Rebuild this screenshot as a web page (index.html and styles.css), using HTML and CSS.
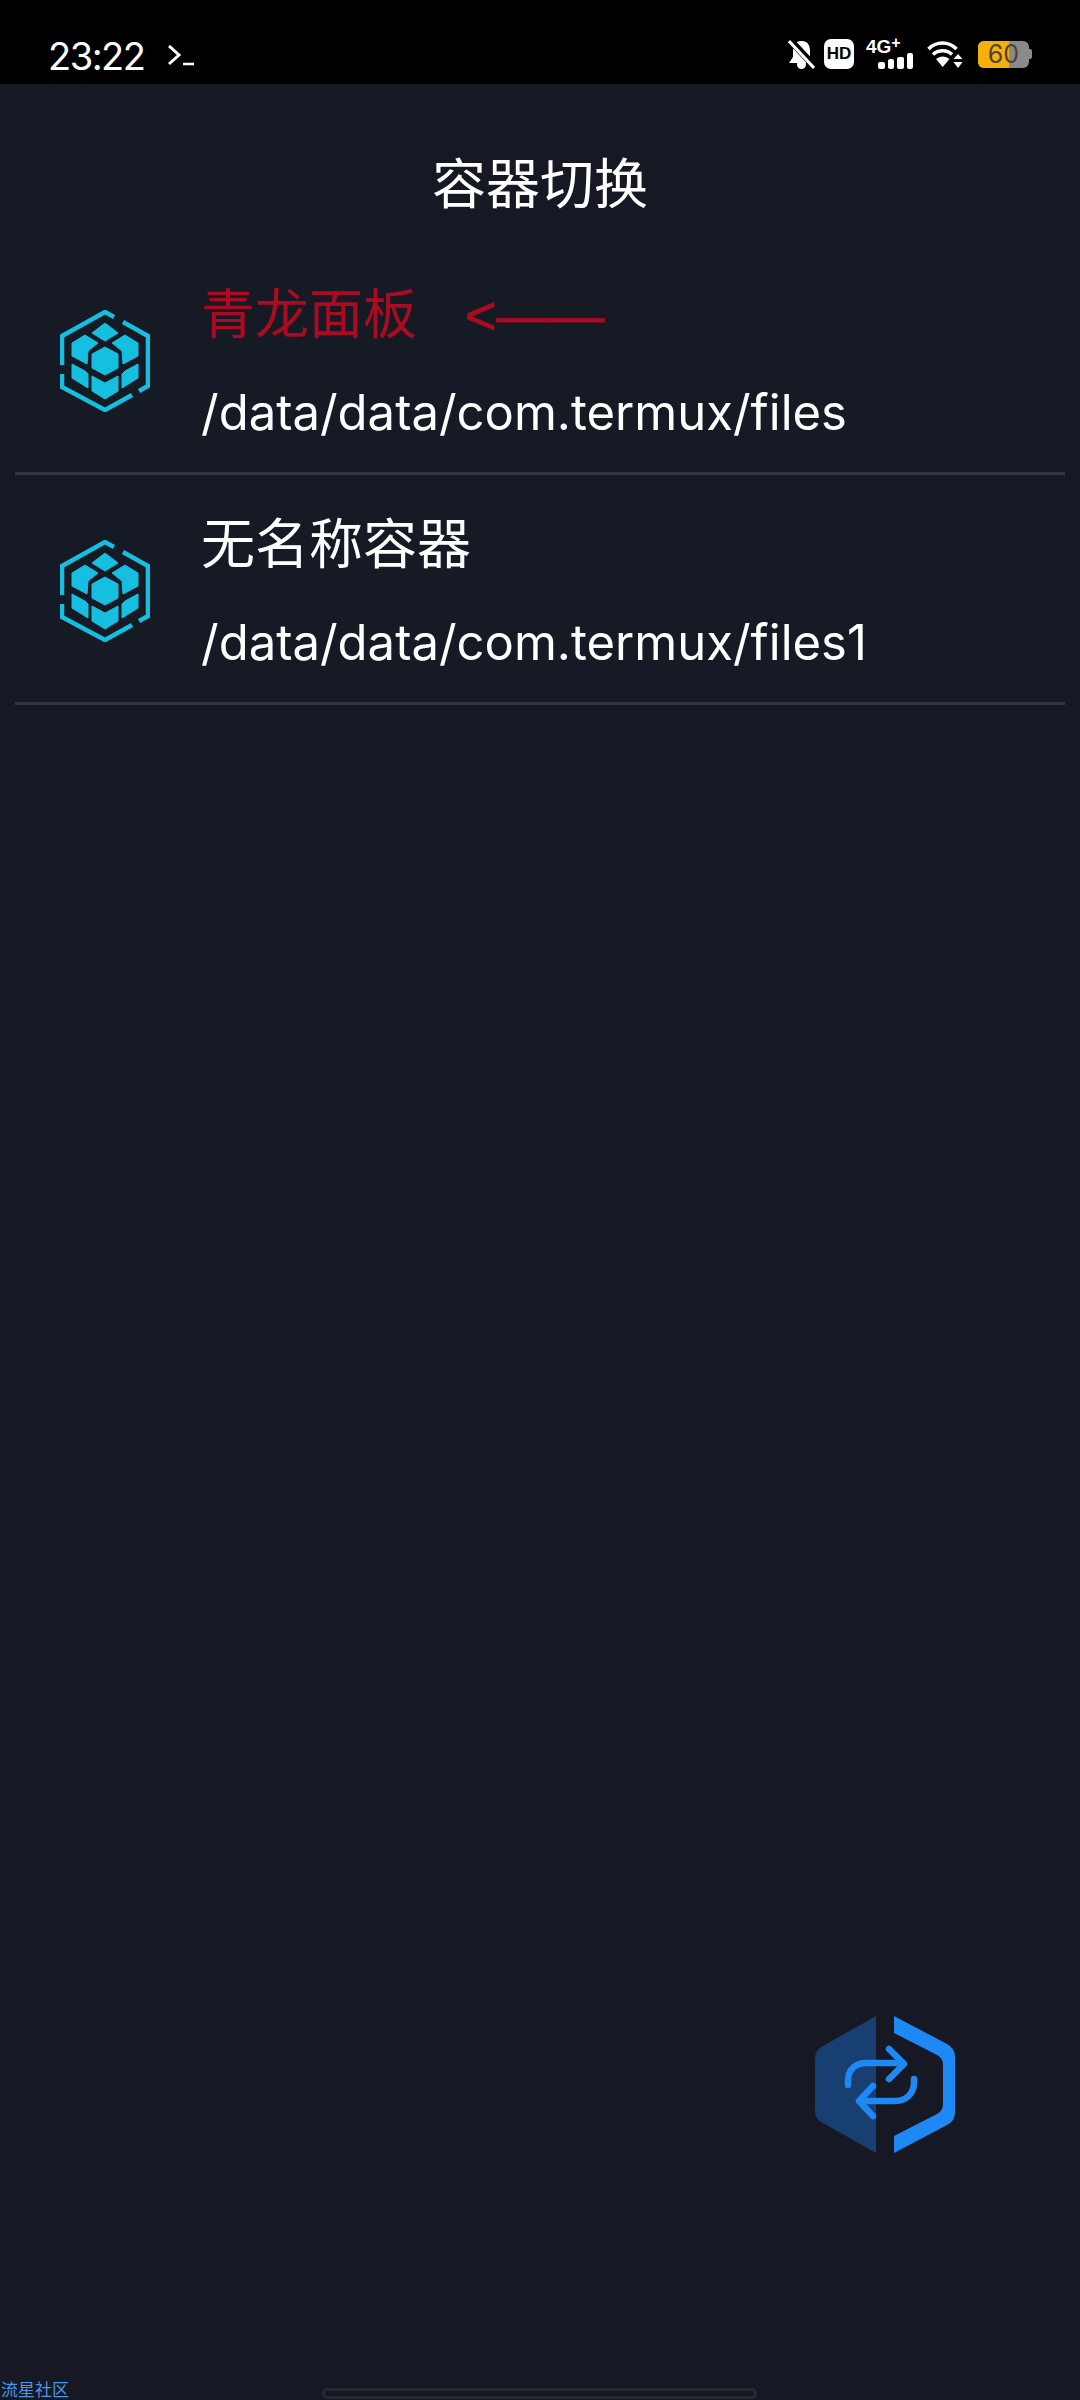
FILE: index.html
```html
<!DOCTYPE html>
<html lang="zh">
<head>
<meta charset="utf-8">
<title>容器切换</title>
<link rel="stylesheet" href="styles.css">
</head>
<body>
<svg class="defs" width="0" height="0" aria-hidden="true">
  <symbol id="cube" viewBox="0 0 90 102">
    <g fill="none" stroke="#14bfe0" stroke-width="4.500">
      <path d="M2 55V26L45 2l9 5"/>
      <path d="M63 12l25 14v50l-9 5"/>
      <path d="M72 85L45 100 2 77V64"/>
    </g>
    <g fill="#14bfe0" stroke="#14bfe0" stroke-width="1" stroke-linejoin="round">
      <path d="M45 13l13 10-13 8-13-8z"/>
      <path d="M25 25l13 8-10 8-1 13-15-8V33z"/>
      <path d="M65 25l-13 8 10 8 1 13 15-8V33z"/>
      <path d="M45 37l13 7v14l-13 7-13-7V44z"/>
      <path d="M12 54l13 7 3 3v14l-16-10z"/>
      <path d="M78 54l-13 7-3 3v14l16-10z"/>
      <path d="M32 66l13 7 13-7v15l-13 8-13-8z"/>
    </g>
  </symbol>
</svg>
<header class="status">
  <div class="status-left">
    <span class="time">23:22</span>
    <svg class="term" width="26" height="21" viewBox="0 0 26 21"><path d="M1 1l10 9-10 9" fill="none" stroke="#fff" stroke-width="3"/><path d="M15 19h11" stroke="#fff" stroke-width="2.500"/></svg>
  </div>
  <div class="status-right">
    <svg class="s-bell" width="27" height="29" viewBox="0 0 27 29">
      <path d="M13.500 1c6 0 8.500 4 8.500 10v6l4 6H1l4-6v-6C5 5 7.500 1 13.500 1z" fill="#fff"/><circle cx="13.500" cy="24.500" r="4.500" fill="#fff"/>
      <path d="M1 -1l26 28" stroke="#000" stroke-width="7"/><path d="M1 1l25 27" stroke="#fff" stroke-width="3"/>
    </svg>
    <span class="s-hd">HD</span>
    <div class="s-net">
      <span class="s-4g">4G<sup>+</sup></span>
      <div class="bars"><i class="b1"></i><i class="b2"></i><i class="b3"></i><i class="b4"></i></div>
    </div>
    <svg class="s-wifi" width="36" height="27" viewBox="0 0 36 27">
      <g fill="none" stroke="#fff" stroke-width="3.600"><path d="M1.500 8c8-8 20-8 28 0"/><path d="M6 13.500c5.500-5 14-5 19 0"/></g>
      <path d="M9 18c4.500-3.500 9-3.500 13.500 0l-6.800 8z" fill="#fff"/><path d="M31 13l4.500 5h-9zM31 27l4.500-6h-9z" fill="#fff"/>
    </svg>
    <div class="battery"><div class="batt-body"><span class="batt-fill"></span><span class="batt-num">60</span></div><i class="batt-cap"></i></div>
  </div>
</header>
<main class="screen">
  <h1 class="title">容器切换</h1>
  <ul class="list">
    <li class="row">
      <svg class="cube" width="90" height="102"><use href="#cube"/></svg>
      <div class="info">
        <div class="name name-red"><span>青龙面板</span><span class="arrow">&lt;——</span></div>
        <div class="path">/data/data/com.termux/files</div>
      </div>
    </li>
    <li class="row">
      <svg class="cube" width="90" height="102"><use href="#cube"/></svg>
      <div class="info">
        <div class="name">无名称容器</div>
        <div class="path">/data/data/com.termux/files1</div>
      </div>
    </li>
  </ul>
  <svg class="fab" width="140" height="137" viewBox="0 0 140 137">
    <path d="M61 0v137L8 107q-8-4-8-12V42q0-8 8-12z" fill="#173f72"/>
    <path d="M79 0v17l43 22q6 3 6 10v39q0 7-6 10l-43 22v17l53-28q8-4 8-13V41q0-9-8-13z" fill="#1e88f5"/>
    <g fill="none" stroke="#1e88f5" stroke-width="6.500" stroke-linecap="round" stroke-linejoin="round">
      <path d="M33 69v-4c0-12 8-18 19-18h36"/>
      <path d="M74 33l15 15-15 15"/>
      <path d="M99 63v3c0 12-8 19-19 19H45"/>
      <path d="M58 70L44 85l14 15"/>
    </g>
  </svg>
  <span class="wm">流星社区</span>
  <div class="home-bar"></div>
</main>
</body>
</html>
```
FILE: styles.css
```css
* { box-sizing: border-box; }
html, body { margin: 0; padding: 0; }
body {
  width: 1080px;
  height: 2400px;
  overflow: hidden;
  background: #161923;
  color: #fff;
  font-family: Inter, "Noto Sans CJK SC", sans-serif;
}
.defs { display: block; height: 0; }
.status {
  height: 84px;
  background: #000;
  display: flex;
  justify-content: space-between;
  padding: 0 48px;
}
.status-left { display: flex; align-items: center; gap: 24px; padding-top: 28px; }
.time { font-size: 38px; line-height: 56px; letter-spacing: -1.5px; }
.term { margin-top: -2px; }
.status-right { display: flex; align-items: center; gap: 12px; padding-top: 39px; height: 69px; }
.s-bell { display: block; margin-right: -3px; }
.s-hd {
  width: 30px; height: 30px; border-radius: 7px;
  background: #fff; color: #000;
  font: 700 17px/30px "Liberation Sans", sans-serif;
  text-align: center;
}
.s-net { width: 47px; position: relative; height: 29px; }
.s-4g {
  position: absolute; left: 0; top: -2px;
  font: 700 19px/18px "Liberation Sans", sans-serif;
}
.s-4g sup { font-size: 16px; line-height: 0; vertical-align: 5px; }
.bars { position: absolute; right: 0; bottom: 0; display: flex; align-items: flex-end; gap: 3px; }
.bars i { display: block; width: 6.5px; background: #fff; border-radius: 2px; }
.b1 { height: 7px; } .b2 { height: 10px; } .b3 { height: 12px; } .b4 { height: 16px; }
.s-wifi { margin-left: 2px; margin-top: 1px; }
.battery { display: flex; align-items: center; margin-left: 3px; }
.batt-body {
  width: 51px; height: 27px; border-radius: 6px;
  background: #8a8a8a; position: relative;
  display: flex; justify-content: center; align-items: center;
}
.batt-fill { position: absolute; left: 0; top: 0; bottom: 0; width: 60%; background: #f5b00c; border-radius: 6px 0 0 6px; }
.batt-num { position: relative; color: #4a4334; font: 400 25px/27px Inter, sans-serif; }
.batt-cap { display: block; width: 3px; height: 10px; background: #8a8a8a; border-radius: 0 2px 2px 0; }
.screen { position: relative; height: 2316px; }
.title {
  margin: 0;
  padding-top: 70px;
  height: 161px;
  text-align: center;
  font-size: 54px;
  font-weight: 400;
  line-height: 62px;
}
.list { list-style: none; margin: 0; padding: 0 15px; }
.row {
  height: 230px;
  display: flex;
  align-items: center;
  padding-left: 45px;
  border-bottom: 3px solid #33363f;
  background: #151a25;
}
.cube { flex: none; margin-top: 4px; }
.info { margin-left: 51px; margin-top: 6px; }
.name { font-size: 54px; line-height: 68px; display: flex; }
.name-red { color: #ab0b20; }
.arrow { margin-left: 48px; font-family: "Liberation Sans", sans-serif; -webkit-text-stroke: 0.8px #ab0b20; }
.path { font-size: 49px; line-height: 60px; margin-top: 34px; }
.fab { position: absolute; left: 815px; top: 1932px; }
.wm { position: absolute; left: 1px; bottom: 0; font-size: 17px; line-height: 20px; color: #4a96e8; }
.home-bar {
  position: absolute; left: 322px; top: 2304px;
  width: 435px; height: 11px;
  border: 3px solid #262932;
  border-radius: 6px;
}
```
